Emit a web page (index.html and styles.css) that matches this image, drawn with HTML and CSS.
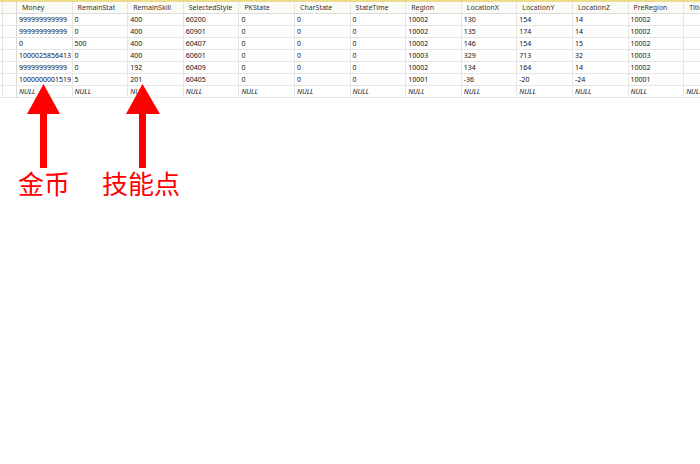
FILE: index.html
```html
<!DOCTYPE html>
<html>
<head>
<meta charset="utf-8">
<link rel="stylesheet" href="styles.css">
</head>
<body>
<div class="page">
  <div class="grid">
    <div class="row head">
      <div class="g0"></div><div class="g1"></div>
      <div class="c">Money</div><div class="c">RemainStat</div><div class="c">RemainSkill</div><div class="c">SelectedStyle</div><div class="c">PKState</div><div class="c">CharState</div><div class="c">StateTime</div><div class="c">Region</div><div class="c">LocationX</div><div class="c">LocationY</div><div class="c">LocationZ</div><div class="c">PreRegion</div><div class="c">Title</div>
    </div>
    <div class="row">
      <div class="g0"></div><div class="g1"></div>
      <div class="c">999999999999</div><div class="c">0</div><div class="c">400</div><div class="c">60200</div><div class="c">0</div><div class="c">0</div><div class="c">0</div><div class="c">10002</div><div class="c">130</div><div class="c">154</div><div class="c">14</div><div class="c">10002</div><div class="c"></div>
    </div>
    <div class="row">
      <div class="g0"></div><div class="g1"></div>
      <div class="c">999999999999</div><div class="c">0</div><div class="c">400</div><div class="c">60901</div><div class="c">0</div><div class="c">0</div><div class="c">0</div><div class="c">10002</div><div class="c">135</div><div class="c">174</div><div class="c">14</div><div class="c">10002</div><div class="c"></div>
    </div>
    <div class="row">
      <div class="g0"></div><div class="g1"></div>
      <div class="c">0</div><div class="c">500</div><div class="c">400</div><div class="c">60407</div><div class="c">0</div><div class="c">0</div><div class="c">0</div><div class="c">10002</div><div class="c">146</div><div class="c">154</div><div class="c">15</div><div class="c">10002</div><div class="c"></div>
    </div>
    <div class="row">
      <div class="g0"></div><div class="g1"></div>
      <div class="c">1000025856413</div><div class="c">0</div><div class="c">400</div><div class="c">60601</div><div class="c">0</div><div class="c">0</div><div class="c">0</div><div class="c">10003</div><div class="c">329</div><div class="c">713</div><div class="c">32</div><div class="c">10003</div><div class="c"></div>
    </div>
    <div class="row">
      <div class="g0"></div><div class="g1"></div>
      <div class="c">999999999999</div><div class="c">0</div><div class="c">192</div><div class="c">60409</div><div class="c">0</div><div class="c">0</div><div class="c">0</div><div class="c">10002</div><div class="c">134</div><div class="c">164</div><div class="c">14</div><div class="c">10002</div><div class="c"></div>
    </div>
    <div class="row">
      <div class="g0"></div><div class="g1"></div>
      <div class="c">1000000001519</div><div class="c">5</div><div class="c">201</div><div class="c">60405</div><div class="c">0</div><div class="c">0</div><div class="c">0</div><div class="c">10001</div><div class="c">-36</div><div class="c">-20</div><div class="c">-24</div><div class="c">10001</div><div class="c"></div>
    </div>
    <div class="row null">
      <div class="g0"></div><div class="g1"></div>
      <div class="c">NULL</div><div class="c">NULL</div><div class="c">NULL</div><div class="c">NULL</div><div class="c">NULL</div><div class="c">NULL</div><div class="c">NULL</div><div class="c">NULL</div><div class="c">NULL</div><div class="c">NULL</div><div class="c">NULL</div><div class="c">NULL</div><div class="c">NULL</div>
    </div>
  </div>

  <svg class="arrows" width="700" height="464" viewBox="0 0 700 464">
    <polygon points="43.5,84 27,114 60,114" fill="#ff0000"/>
    <rect x="40" y="113" width="7" height="55" fill="#ff0000"/>
    <polygon points="142.5,84 126,114 160,114" fill="#ff0000"/>
    <rect x="139" y="113" width="7" height="55" fill="#ff0000"/>
  </svg>
  <div class="label l1">金币</div>
  <div class="label l2">技能点</div>
</div>
</body>
</html>
```
FILE: styles.css
```css
html, body {
  margin: 0;
  padding: 0;
  background: #ffffff;
}
.page {
  position: relative;
  width: 700px;
  height: 464px;
  overflow: hidden;
  background: #ffffff;
}
.grid {
  border-top: 2px solid #eedc8e;
  font-family: "Noto Sans", "Open Sans", sans-serif;
  font-size: 7px;
  color: #111111;
  width: 760px;
  height: 97px;
  overflow: hidden;
}
.row {
  display: grid;
  grid-template-columns: 3px 14px repeat(12, 55.6px) 60px;
  height: 11px;
  border-bottom: 1px solid #e6e6e6;
  line-height: 11px;
}
.row.head {
  background: #fcfcf7;
  color: #333333;
  border-bottom: 1px solid #dcdcdc;
}
.g0 {
  border-right: 1px solid #e2e2e2;
}
.g1 {
  border-right: 1px solid #d8d8d8;
}
.c {
  padding-left: 2px;
  border-right: 1px solid #e6e6e6;
  white-space: nowrap;
  overflow: hidden;
}
.head .c {
  padding-left: 5px;
}
.null .c {
  font-style: italic;
}
.arrows {
  position: absolute;
  left: 0;
  top: 0;
}
.label {
  position: absolute;
  top: 168px;
  font-family: "Noto Sans CJK SC", sans-serif;
  font-size: 26px;
  line-height: 30px;
  color: #ff0000;
}
.l1 {
  left: 18px;
}
.l2 {
  left: 102px;
}
```
